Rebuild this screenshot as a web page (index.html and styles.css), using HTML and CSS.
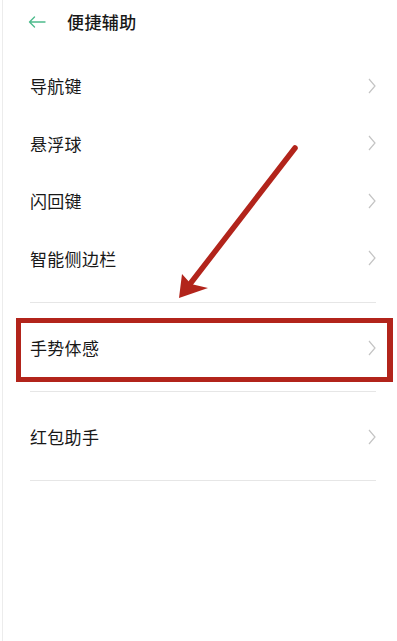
FILE: index.html
```html
<!DOCTYPE html>
<html lang="zh">
<head>
<meta charset="utf-8">
<link rel="stylesheet" href="styles.css">
</head>
<body>
<div class="page">
  <header class="header">
    <svg class="back" viewBox="0 0 18 12" width="18" height="12"><path d="M17 6H1.5M6.5 1L1.5 6l5 5" fill="none" stroke="#4dbb8c" stroke-width="1.4" stroke-linecap="round" stroke-linejoin="round"/></svg>
    <h1 class="title">便捷辅助</h1>
  </header>

  <section class="group group-first">
    <div class="row"><span>导航键</span><svg class="chev" viewBox="0 0 8 16" width="8" height="16"><path d="M1 1l6 7-6 7" fill="none" stroke="#c4c4c4" stroke-width="1.2"/></svg></div>
    <div class="row"><span>悬浮球</span><svg class="chev" viewBox="0 0 8 16" width="8" height="16"><path d="M1 1l6 7-6 7" fill="none" stroke="#c4c4c4" stroke-width="1.2"/></svg></div>
    <div class="row"><span>闪回键</span><svg class="chev" viewBox="0 0 8 16" width="8" height="16"><path d="M1 1l6 7-6 7" fill="none" stroke="#c4c4c4" stroke-width="1.2"/></svg></div>
    <div class="row"><span>智能侧边栏</span><svg class="chev" viewBox="0 0 8 16" width="8" height="16"><path d="M1 1l6 7-6 7" fill="none" stroke="#c4c4c4" stroke-width="1.2"/></svg></div>
  </section>

  <section class="group">
    <div class="row row-tall"><span>手势体感</span><svg class="chev" viewBox="0 0 8 16" width="8" height="16"><path d="M1 1l6 7-6 7" fill="none" stroke="#c4c4c4" stroke-width="1.2"/></svg></div>
  </section>

  <section class="group">
    <div class="row row-tall"><span>红包助手</span><svg class="chev" viewBox="0 0 8 16" width="8" height="16"><path d="M1 1l6 7-6 7" fill="none" stroke="#c4c4c4" stroke-width="1.2"/></svg></div>
  </section>

  <div class="highlight"></div>
  <svg class="pointer" viewBox="0 0 397 641" width="397" height="641">
    <line x1="295" y1="148" x2="190" y2="284" stroke="#b2241b" stroke-width="5.5" stroke-linecap="round"/>
    <path d="M179 298 L182 274 L191 284 L208 288 Z" fill="#b2241b"/>
  </svg>
</div>
</body>
</html>
```

FILE: styles.css
```css
html, body {
  margin: 0;
  padding: 0;
  background: #ffffff;
}

.page {
  position: relative;
  height: 641px;
  box-sizing: border-box;
  margin-left: 2px;
  width: 395px;
  border-left: 1px solid #ececec;
  font-family: "Noto Sans CJK SC", "Noto Sans", sans-serif;
  color: #181818;
  overflow: hidden;
}

.header {
  height: 42px;
  display: flex;
  align-items: center;
  padding-left: 25px;
  gap: 21px;
}

.back {
  display: block;
  margin-top: 1px;
}

.title {
  margin: 0;
  font-size: 17px;
  font-weight: 500;
  letter-spacing: 0.4px;
  line-height: 1;
}

.group {
  margin: 0 21px 0 27px;
  border-bottom: 1px solid #e6e6e6;
}

.group-first {
  padding: 15px 0 15px;
}

.row {
  display: flex;
  align-items: center;
  justify-content: space-between;
  height: 57.5px;
  font-size: 17px;
  letter-spacing: 0.3px;
}

.row-tall {
  height: 87px;
  padding-top: 1px;
}

.chev {
  display: block;
  margin-right: 0;
}

.highlight {
  position: absolute;
  left: 13px;
  top: 318px;
  width: 377px;
  height: 64px;
  box-sizing: border-box;
  border: 5px solid #b2241b;
  border-right-width: 6px;
}

.pointer {
  position: absolute;
  left: -3px;
  top: 0;
  pointer-events: none;
}
```
